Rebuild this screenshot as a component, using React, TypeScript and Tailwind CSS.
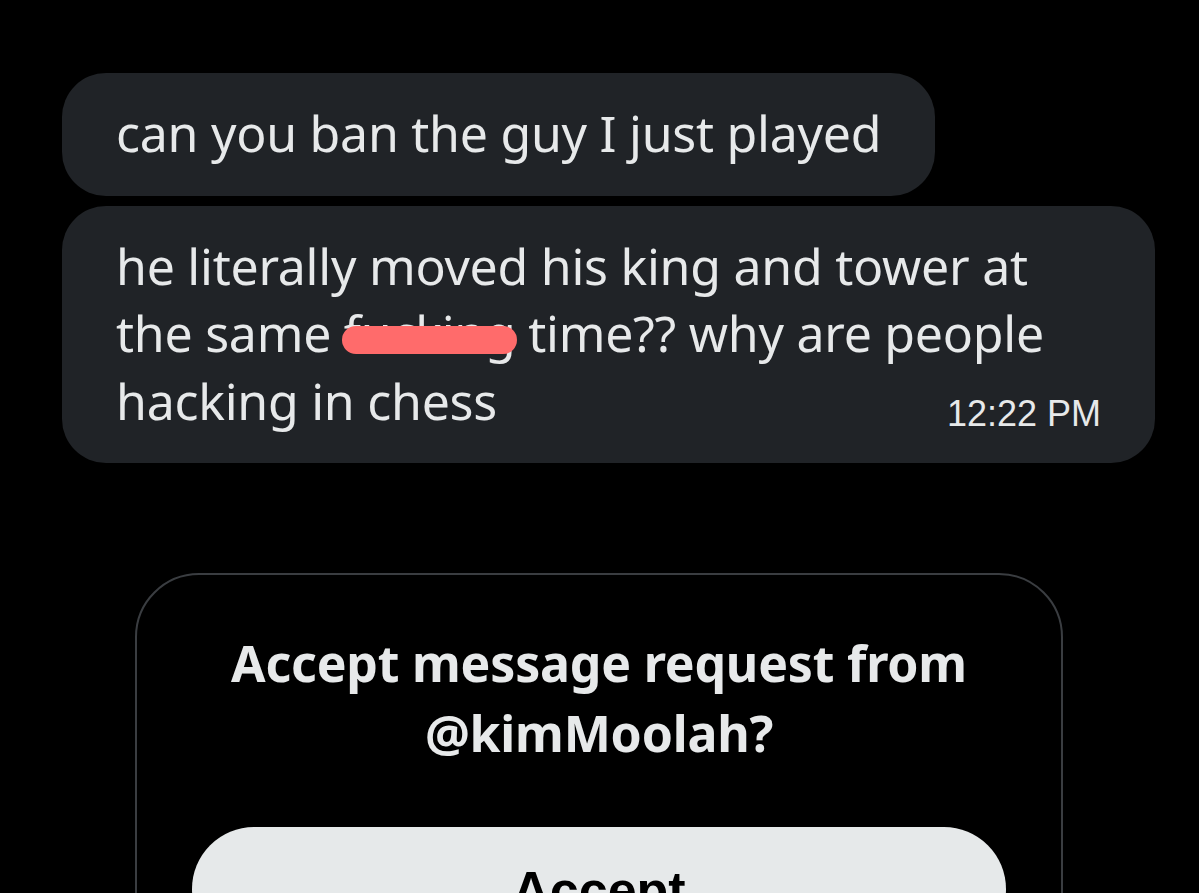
import React from "react";

const msgFont = { fontFamily: '"Noto Sans", "Open Sans", sans-serif' };

export default function App() {
  return (
    <div className="w-[1199px] h-[893px] overflow-hidden bg-black pt-[73px] pl-[62px]">
      <div
        className="w-fit rounded-[44px] bg-[#202327] px-[54px] pt-[27px] pb-[28px] text-[50px] leading-[67.5px] tracking-[-0.25px] text-[#e7e9ea]"
        style={msgFont}
      >
        can you ban the guy I just played
      </div>
      <div
        className="mt-[10px] w-[1093px] rounded-[44px] bg-[#202327] px-[54px] pt-[27px] pb-[28px] text-[50px] leading-[67.5px] tracking-[-0.25px] text-[#e7e9ea]"
        style={msgFont}
      >
        <div>he literally moved his king and tower at</div>
        <div>
          the same{" "}
          <span className="relative">
            fucking
            <span className="absolute left-[-2px] right-[-2px] top-[27px] h-[28px] rounded-full bg-[#ff6b6b]" />
          </span>{" "}
          time?? why are people
        </div>
        <div className="flex items-baseline justify-between">
          <span>hacking in chess</span>
          <span className="font-['Liberation_Sans',Arial,sans-serif] text-[36px] leading-[40px] tracking-normal translate-y-[6px]">
            12:22 PM
          </span>
        </div>
      </div>

      <div className="mt-[110px] ml-[73px] w-[928px] h-[400px] rounded-[64px] border-2 border-[#3a3d41] px-[55px] pt-[53px]">
        <div
          className="text-center text-[50px] leading-[70px] font-bold tracking-[-0.2px] text-[#e7e9ea]"
          style={msgFont}
        >
          Accept message request from
          <br />
          @kimMoolah?
        </div>
        <div className="mt-[59px] flex h-[124px] items-center justify-center rounded-full bg-[#e6e9ea]">
          <span className="font-['Liberation_Sans',Arial,sans-serif] text-[52px] leading-[52px] font-bold text-black translate-y-[1px]">
            Accept
          </span>
        </div>
      </div>
    </div>
  );
}
